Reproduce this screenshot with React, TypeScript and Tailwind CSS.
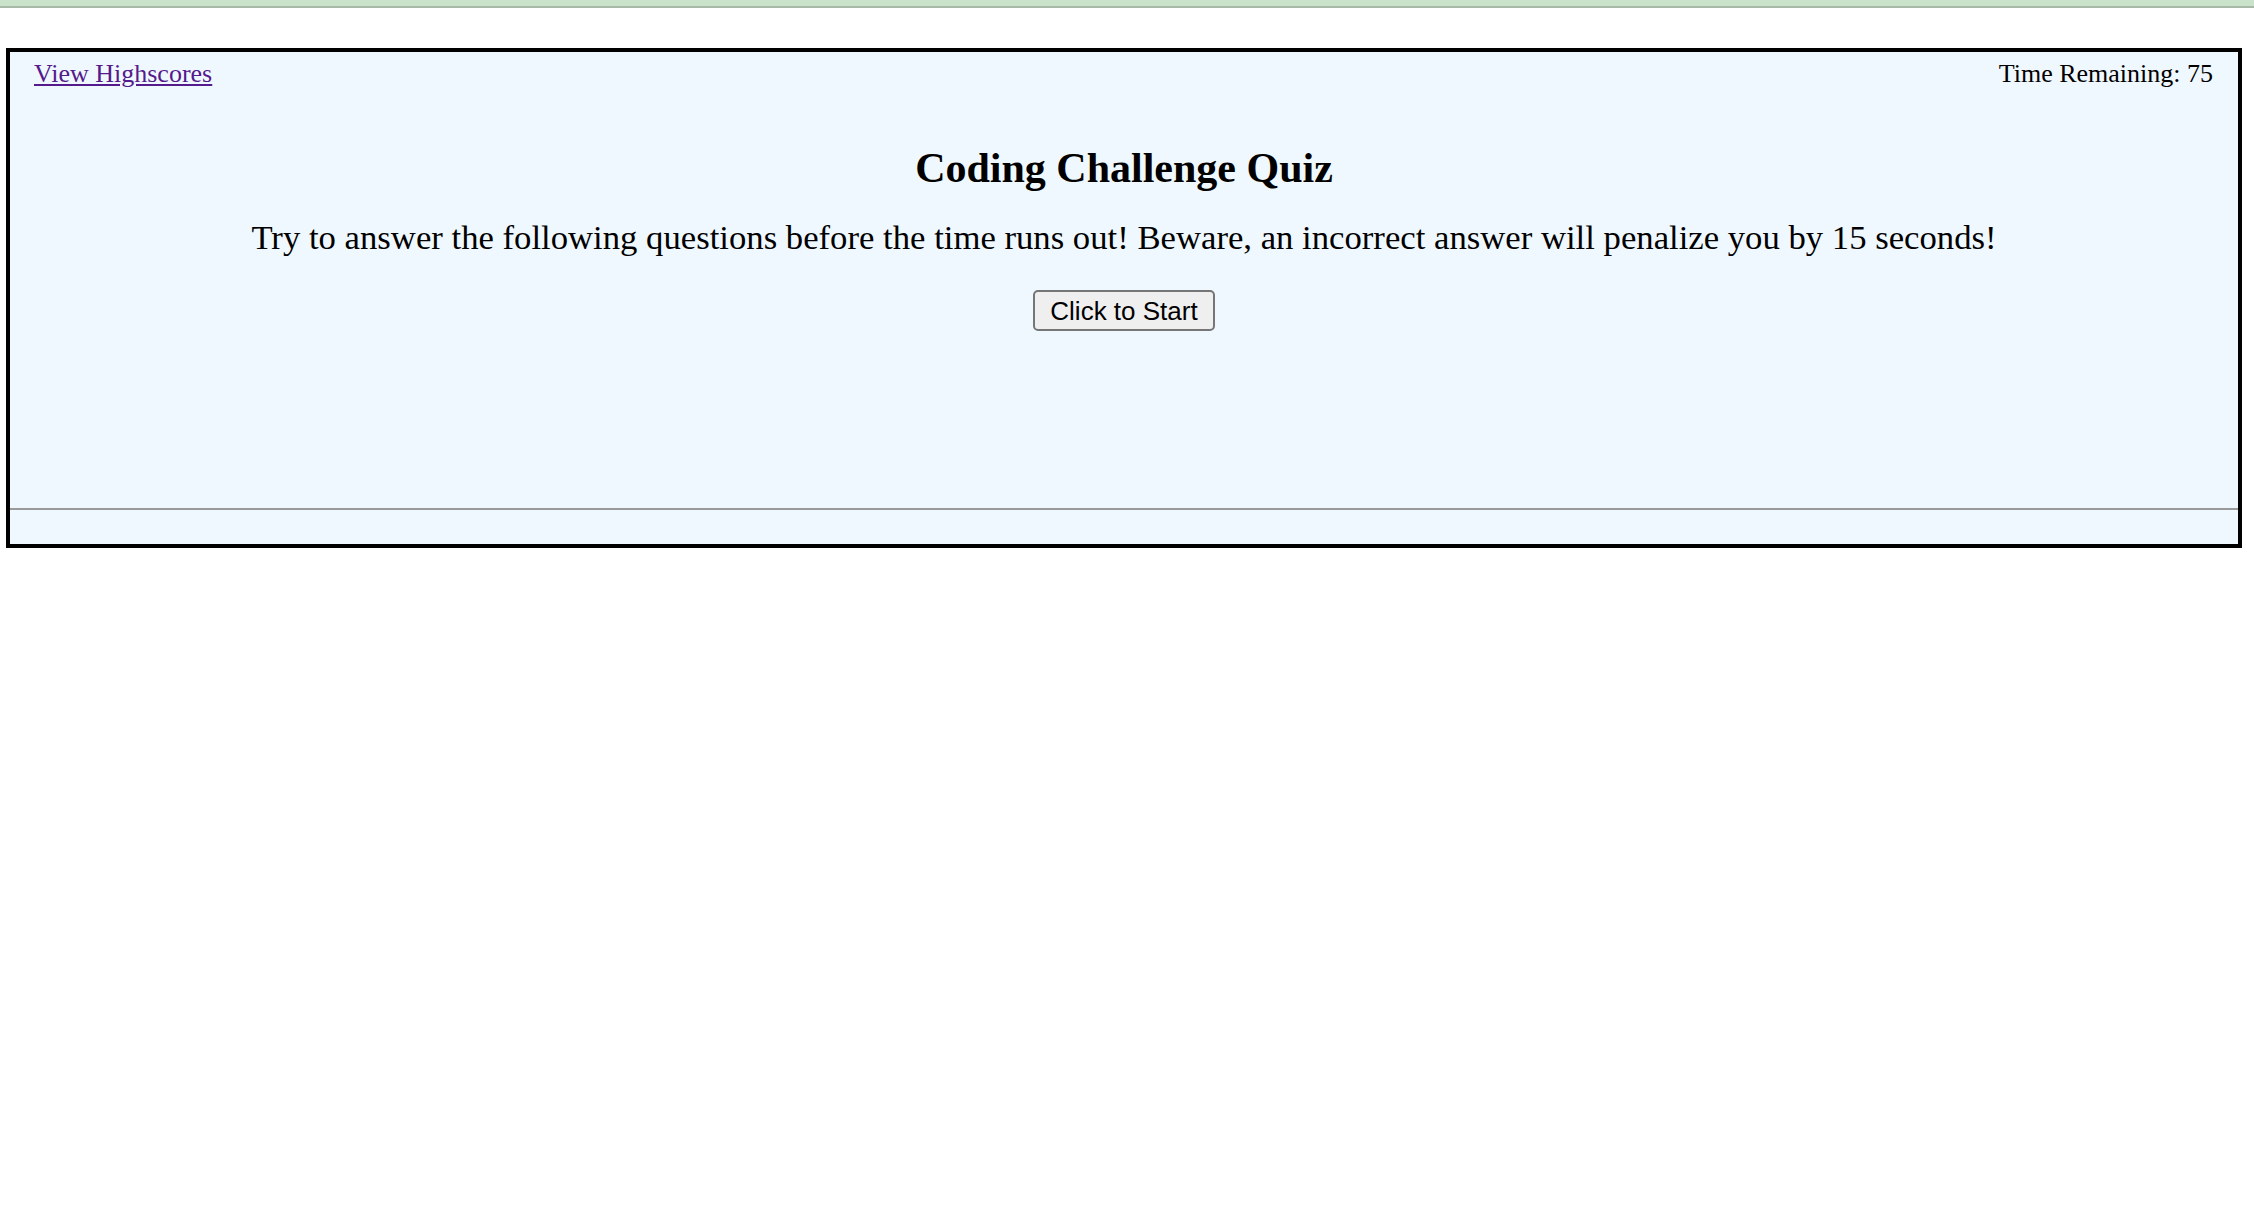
export default function App() {
  const serif = { fontFamily: '"Liberation Serif", "DejaVu Serif", serif' };

  return (
    <div className="min-h-screen bg-white" style={serif}>
      <div className="h-[8px] bg-[#cae2c9] border-b-2 border-[#a8b8a6]" />

      <div className="mt-[40px] ml-[6px] mr-[12px] border-4 border-black bg-[#f0f8ff]">
        <header className="flex justify-between items-start pl-[24px] pr-[25px] pt-[7px]">
          <a href="#" className="text-[26px] leading-[30px] text-[#551a8b] underline">
            View Highscores
          </a>
          <span className="text-[26px] leading-[30px] text-black">Time Remaining: 75</span>
        </header>

        <main className="flex flex-col items-center text-center h-[419px]">
          <h1 className="mt-[55px] text-[42px] leading-[48px] font-bold text-black">
            Coding Challenge Quiz
          </h1>
          <p className="mt-[24px] text-[34.7px] leading-[44px] text-black">
            Try to answer the following questions before the time runs out! Beware, an incorrect answer will penalize you by 15 seconds!
          </p>
          <button
            className="mt-[30px] w-[182px] h-[41px] bg-[#efefef] border-2 border-[#767676] rounded-[5px] text-[26px] leading-none text-black"
            style={{ fontFamily: '"Liberation Sans", Arial, sans-serif' }}
          >
            Click to Start
          </button>
        </main>

        <hr className="border-0 border-t-2 border-[#9a9a9a]" />
        <div className="h-[34px]" />
      </div>
    </div>
  );
}
